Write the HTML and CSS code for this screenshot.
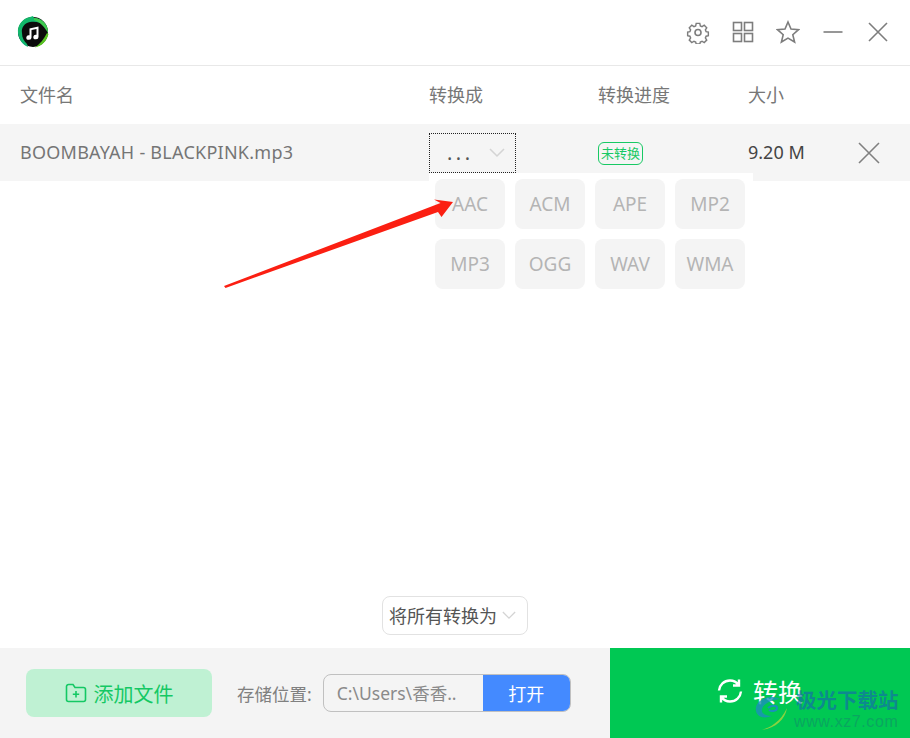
FILE: index.html
```html
<!DOCTYPE html>
<html lang="zh-CN">
  <head>
    <meta charset="UTF-8" />
    <title>音频转换</title>
    <link rel="stylesheet" href="styles.css">
  </head>
  <body>
    <div class="app">
      <header class="titlebar">
        <svg class="logo" viewBox="0 0 32 32" width="32" height="32">
          <circle cx="16" cy="16" r="15" fill="#0b0b0b" />
          <path d="M1 17C0 9 6 2 13 1l3-1 1 2c6 0 11 4 13 9-6-5-12-6-17-5C8 7 4 11 5 17c0 5 2 8 5 11l1 3C6 29 2 24 1 17Z" fill="#12b76a" />
          <path d="M17 2c6 0 12 5 13 9 1 2 1 4 1 6-3-5-7-11-14-13Z" fill="#3ec94f" />
          <path d="M30 17l1.500 1C30 25 25 30 18 31.500 23 28 27 23 30 17Z" fill="#58c322" />
          <path d="M1 15C1 21 4 27 11 30 6 29 2 24 1 15Z" fill="#16a99a" />
          <path d="M12.500 12.500l9-2v10.500a2.600 2.300 0 1 1-2-2.200v-5.800l-5 1v7.500a2.600 2.300 0 1 1-2-2.200Z" fill="#fff" />
        </svg>
        <div class="window-tools">
          <svg class="tool" viewBox="0 0 24 24" width="24" height="24">
            <path d="M10 2.500h4l.6 2.800 1.900.8 2.400-1.500 2.800 2.800-1.500 2.400.8 1.900 2.500.6v3.900l-2.500.6-.8 1.900 1.500 2.400-2.800 2.800-2.400-1.500-1.900.8-.6 2.300h-4l-.6-2.300-1.900-.8-2.400 1.500-2.800-2.800 1.500-2.400-.8-1.900-2.500-.6v-3.900l2.500-.6.8-1.900-1.500-2.400 2.800-2.800 2.400 1.500 1.900-.8Z" transform="translate(1.200 1.100) scale(.9)" />
            <circle cx="12" cy="12.500" r="3" />
          </svg>
          <svg class="tool" viewBox="0 0 24 24" width="24" height="24">
            <rect x="2.500" y="2.500" width="8" height="8" />
            <rect x="13.500" y="2.500" width="8" height="8" />
            <rect x="2.500" y="13.500" width="8" height="8" />
            <rect x="13.500" y="13.500" width="8" height="8" />
          </svg>
          <svg class="tool" viewBox="0 0 24 24" width="24" height="24">
            <path d="M12 2l3 7 7.500.7-5.700 5 1.800 7.300-6.600-3.900L5.400 22l1.800-7.300-5.700-5L9 9Z" />
          </svg>
          <svg class="tool" viewBox="0 0 24 24" width="24" height="24">
            <path d="M2.500 12h19" />
          </svg>
          <svg class="tool" viewBox="0 0 24 24" width="24" height="24">
            <path d="M3 3l18 18M21 3L3 21" />
          </svg>
        </div>
      </header>

      <div class="columns">
        <span class="col-name">文件名</span>
        <span class="col-format">转换成</span>
        <span class="col-progress">转换进度</span>
        <span class="col-size">大小</span>
      </div>

      <div class="file-row">
        <span class="col-name file-name">BOOMBAYAH - BLACKPINK.mp3</span>
        <div class="col-format">
          <div class="format-select">
            <span class="dots">...</span>
            <svg class="chevron" viewBox="0 0 16 10" width="16" height="10"><path d="M1 1l7 7 7-7" /></svg>
          </div>
        </div>
        <div class="col-progress"><span class="status">未转换</span></div>
        <span class="col-size file-size">9.20 M</span>
        <svg class="row-close" viewBox="0 0 22 22" width="22" height="22"><path d="M1 1l20 20M21 1L1 21" /></svg>
      </div>

      <main class="list-area">
        <div class="format-menu">
          <span class="format-item">AAC</span>
          <span class="format-item">ACM</span>
          <span class="format-item">APE</span>
          <span class="format-item">MP2</span>
          <span class="format-item">MP3</span>
          <span class="format-item">OGG</span>
          <span class="format-item">WAV</span>
          <span class="format-item">WMA</span>
        </div>
        <div class="convert-all">
          <span>将所有转换为</span>
          <svg class="chevron" viewBox="0 0 16 10" width="14" height="9"><path d="M1 1l7 7 7-7" /></svg>
        </div>
      </main>

      <footer class="footer">
        <div class="footer-left">
          <button class="add-btn">
            <svg viewBox="0 0 22 22" width="22" height="22">
              <path d="M1.500 4.500a2 2 0 0 1 2-2h4.500l2 3h8.500a2 2 0 0 1 2 2v10a2 2 0 0 1-2 2h-15a2 2 0 0 1-2-2Z" />
              <path d="M11 9v6.500M7.800 12.200h6.400" />
            </svg>
            添加文件
          </button>
          <span class="save-label">存储位置:</span>
          <div class="save-path">
            <span class="path-text">C:\Users\香香..</span>
            <span class="open-btn">打开</span>
          </div>
        </div>
        <button class="convert-btn">
          <svg viewBox="0 0 26 26" width="26" height="26">
            <path d="M2 12.500C2.500 7 7 2.500 13 2.500c3.500 0 6.500 1.500 8.500 4.500M22 1.500v6h-6" />
            <path d="M24 13.500c-.5 5.500-5 10-11 10-3.500 0-6.500-1.500-8.500-4.500M4 24.500v-6h6" />
          </svg>
          转换
        </button>
      </footer>

      <svg class="red-arrow" viewBox="0 0 910 738" width="910" height="738">
        <path d="M224 286L440.500 203 434 199.500 453 202 441.500 217 438 212 225.500 288Z" />
      </svg>

      <div class="watermark">
        <svg viewBox="0 0 46 46" width="46" height="46">
          <path d="M30 10C18 4 4 12 6 22c1 6 8 8 16 5-6 0-11-2-10-7 1-5 9-9 18-10Z" fill="#1b8fbd" opacity=".8" />
          <path d="M18 19c3-3 9-3 9 0s-5 4-8 2" fill="none" stroke="#1b8fbd" stroke-width="2" />
          <path d="M10 41c8-1 20-7 27-22-2 12-12 21-27 22Z" fill="#b7d63a" opacity=".75" />
        </svg>
        <div class="watermark-text">
          <span class="watermark-title">极光下载站</span>
          <span class="watermark-url">www.xz7.com</span>
        </div>
      </div>
    </div>
  </body>
</html>
```

FILE: styles.css
```css
html, body {
  margin: 0;
  height: 100%;
}

body {
  background: #fff;
  font-family: "Noto Sans", "Noto Sans CJK SC", sans-serif;
  color: #666;
}

.app {
  position: relative;
  width: 910px;
  height: 738px;
  display: flex;
  flex-direction: column;
  overflow: hidden;
}

/* title bar */
.titlebar {
  height: 66px;
  flex: none;
  box-sizing: border-box;
  border-bottom: 1px solid #e8e8e8;
  display: flex;
  align-items: center;
  justify-content: space-between;
  padding: 0 20px 0 17px;
}

.logo {
  margin-bottom: 2px;
}

.window-tools {
  display: flex;
  gap: 21px;
  margin-bottom: 2px;
}

.tool {
  fill: none;
  stroke: #7d7d7d;
  stroke-width: 1.6;
}

/* table */
.columns, .file-row {
  display: flex;
  align-items: center;
  padding-left: 20px;
  flex: none;
}

.columns {
  height: 58px;
  font-size: 18px;
  color: #777;
  padding-bottom: 2px;
  box-sizing: border-box;
}

.file-row {
  height: 57px;
  background: #f5f5f5;
  position: relative;
  font-size: 18px;
}

.col-name {
  width: 409px;
}

.col-format {
  width: 169px;
}

.col-progress {
  width: 150px;
}

.file-name {
  color: #757575;
  letter-spacing: .25px;
  margin-bottom: 2px;
}

.file-size {
  color: #444;
  margin-bottom: 1px;
}

.format-select {
  width: 87px;
  height: 40px;
  box-sizing: border-box;
  border: 1px dotted #222;
  display: flex;
  align-items: center;
  padding-left: 17px;
  gap: 15px;
}

.dots {
  font-size: 20px;
  letter-spacing: 3.500px;
  line-height: 1;
  color: #555;
}

.chevron {
  fill: none;
  stroke: #d4d4d4;
  stroke-width: 1.5;
}

.status {
  display: inline-block;
  border: 1px solid #18c964;
  border-radius: 6px;
  color: #18c964;
  font-size: 13px;
  line-height: 21px;
  padding: 0 2px;
  margin-bottom: 2px;
}

.row-close {
  position: absolute;
  left: 858px;
  top: 18px;
  fill: none;
  stroke: #808080;
  stroke-width: 1.6;
}

/* middle area */
.list-area {
  flex: 1;
  position: relative;
  display: flex;
  flex-direction: column;
  justify-content: flex-end;
  align-items: center;
  padding-bottom: 13px;
}

.format-menu {
  position: absolute;
  left: 429px;
  top: -8px;
  width: 324px;
  box-sizing: border-box;
  padding: 6px 8px 6px 6px;
  background: #fff;
  display: grid;
  grid-template-columns: repeat(4, 70px);
  grid-auto-rows: 50px;
  gap: 10px;
}

.format-item {
  background: #f4f4f4;
  border-radius: 8px;
  display: flex;
  align-items: center;
  justify-content: center;
  color: #b4b4b4;
  font-size: 19px;
}

.convert-all {
  width: 146px;
  height: 39px;
  box-sizing: border-box;
  border: 1px solid #e2e2e2;
  border-radius: 8px;
  display: flex;
  align-items: center;
  padding-left: 6px;
  gap: 5px;
  font-size: 18px;
  color: #555;
}

.convert-all span {
  margin-bottom: 2px;
}

/* footer */
.footer {
  height: 90px;
  flex: none;
  background: #f4f4f4;
  display: flex;
  justify-content: space-between;
}

.footer-left {
  display: flex;
  align-items: center;
  padding-left: 26px;
}

.add-btn {
  width: 186px;
  height: 48px;
  border: 0;
  border-radius: 8px;
  background: #bff1d3;
  color: #14c864;
  font: inherit;
  font-size: 20px;
  display: flex;
  align-items: center;
  justify-content: center;
  gap: 7px;
  padding: 0;
}

.add-btn svg {
  fill: none;
  stroke: #14c864;
  stroke-width: 1.6;
}

.save-label {
  margin-left: 25px;
  font-size: 17.500px;
  color: #808080;
}

.save-path {
  margin-left: 11px;
  width: 248px;
  height: 38px;
  box-sizing: border-box;
  border: 1px solid #c0c0c0;
  border-radius: 8px;
  display: flex;
  overflow: hidden;
  font-size: 17.500px;
}

.path-text {
  flex: 1;
  padding-left: 13px;
  line-height: 36px;
  color: #8a8a8a;
}

.open-btn {
  width: 87px;
  background: #448aff;
  color: #fff;
  font-size: 18px;
  display: flex;
  align-items: center;
  justify-content: center;
}

.convert-btn {
  width: 300px;
  border: 0;
  background: #00c853;
  color: #fff;
  font: inherit;
  font-size: 25px;
  display: flex;
  align-items: center;
  justify-content: center;
  gap: 10px;
  padding: 0 0 4px;
}

.convert-btn svg {
  fill: none;
  stroke: #fff;
  stroke-width: 2.4;
}

/* overlays */
.red-arrow {
  position: absolute;
  left: 0;
  top: 0;
  fill: #fb1f12;
  pointer-events: none;
}

.watermark {
  position: absolute;
  left: 750px;
  top: 689px;
  display: flex;
}

.watermark-text {
  display: flex;
  flex-direction: column;
  margin-top: -1px;
}

.watermark-title {
  font-size: 20.500px;
  font-weight: 700;
  line-height: 24px;
  color: rgba(20, 110, 170, .7);
}

.watermark-url {
  font-family: "Liberation Sans", sans-serif;
  font-size: 16px;
  line-height: 20px;
  margin-left: -2px;
  color: rgba(20, 130, 110, .5);
  letter-spacing: .6px;
}
```
